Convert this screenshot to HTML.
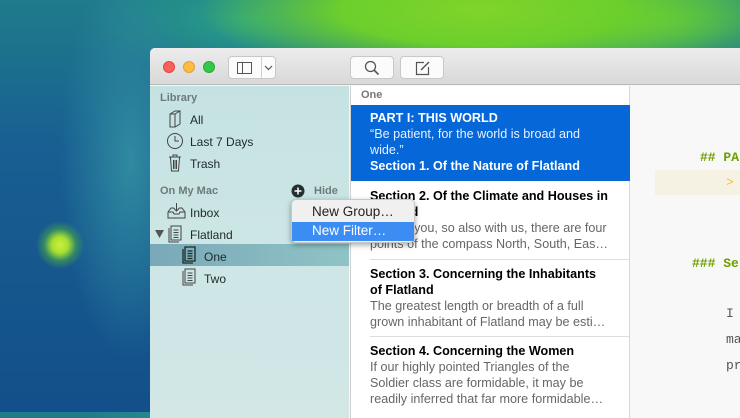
<!DOCTYPE html>
<html><head><meta charset="utf-8"><style>
*{margin:0;padding:0;box-sizing:border-box}
body{width:740px;height:412px;overflow:hidden;position:relative;font-family:"Liberation Sans",sans-serif;
background:
radial-gradient(circle at 60px 245px,#c8f040 0,#a8e030 8px,rgba(80,180,60,.5) 16px,transparent 24px),
radial-gradient(ellipse 280px 70px at 480px 10px,#7fd42a 0,#6ccf2c 50%,transparent 100%),
radial-gradient(ellipse 200px 60px at 650px 20px,#58c848 0,transparent 100%),
radial-gradient(ellipse 70px 200px at 130px 160px,#2f8aa0 0,transparent 100%),
radial-gradient(ellipse 160px 60px at 250px 20px,#2aa088 0,transparent 100%),
linear-gradient(180deg,#1f7c8a 0,#185f92 35%,#134f8a 100%);}
.win{position:absolute;left:150px;top:48px;width:600px;height:370px;background:#f7f7f7;border-radius:5px 0 0 0;overflow:hidden}
.tb{position:absolute;left:0;top:0;width:100%;height:37px;background:linear-gradient(#ececec,#d9d9d9);border-bottom:1px solid #b8b8b8}
.dot{position:absolute;top:13px;width:12px;height:12px;border-radius:50%}
.btn{position:absolute;top:8px;height:23px;background:#fbfbfb;border:1px solid #c8c8c8;border-radius:4px}
.side{position:absolute;left:0;top:38px;width:199px;height:340px;background:linear-gradient(180deg,#c5e2e2,#cfe6e6 60%,#d2e7e6)}
.side .h{position:absolute;left:10px;font-size:11px;color:#6b7b7b;font-weight:bold}
.side .it{position:absolute;font-size:12px;color:#1d2a2a}
.list{position:absolute;left:200px;top:38px;width:280px;height:340px;background:#fff;border-right:1px solid #d8d8d8;border-left:1px solid #d0d0d0}
.cell{position:absolute;left:19px;width:244px;font-size:12.6px;line-height:16px;color:#666;white-space:nowrap}
.cell b{color:#000}
.sep{position:absolute;left:19px;right:0;height:1px;background:#ddd}
.ed{position:absolute;left:481px;top:38px;width:120px;height:340px;background:#f8f8f8;font-family:"Liberation Mono",monospace;font-size:13px}
</style></head><body>
<div class="win">
 <div class="tb">
  <div class="dot" style="left:13px;background:#fc605c;border:1px solid #e0443f"></div>
  <div class="dot" style="left:33px;background:#fdbc40;border:1px solid #dea236"></div>
  <div class="dot" style="left:53px;background:#34c84a;border:1px solid #27aa35"></div>
  <div class="btn" style="left:78px;width:48px">
   <div style="position:absolute;left:8px;top:5px;width:15px;height:12px;border:1px solid #555"></div>
   <div style="position:absolute;left:13px;top:5px;width:1px;height:12px;background:#555"></div>
   <div style="position:absolute;left:32px;top:0;width:1px;height:21px;background:#d0d0d0"></div>
   <svg style="position:absolute;left:35px;top:8px" width="9" height="6"><path d="M1 1L4.5 4.5L8 1" stroke="#555" fill="none" stroke-width="1.2"/></svg>
  </div>
  <div class="btn" style="left:200px;width:44px"><svg style="position:absolute;left:13px;top:3px" width="16" height="16"><circle cx="6.5" cy="6.5" r="5" stroke="#555" fill="none" stroke-width="1.3"/><path d="M10 10L14.5 14.5" stroke="#555" stroke-width="1.6"/></svg></div>
  <div class="btn" style="left:250px;width:44px"><svg style="position:absolute;left:14px;top:3px" width="16" height="16"><path d="M9 2.5H1.5V14.5H13.5V7" stroke="#555" fill="none" stroke-width="1.2"/><path d="M6 10L14 2" stroke="#555" stroke-width="1.5"/></svg></div>
 </div>
 <div class="side">
  <div class="h" style="top:6px">Library</div>
  <svg style="position:absolute;left:18px;top:24px" width="14" height="18"><path d="M2 4L7 1H12V14L7 17H2Z M2 4H7V17 M7 4L12 1" stroke="#444" fill="none"/></svg>
  <div class="it" style="left:40px;top:27px">All</div>
  <svg style="position:absolute;left:16px;top:46px" width="18" height="18"><circle cx="9" cy="9" r="7.5" stroke="#444" fill="none"/><path d="M9 4V9H13" stroke="#444" fill="none"/></svg>
  <div class="it" style="left:40px;top:49px">Last 7 Days</div>
  <svg style="position:absolute;left:18px;top:68px" width="14" height="18"><path d="M1 3H13M5 3V1H9V3M2.5 3.5L3.5 17H10.5L11.5 3.5M5.5 6V15M7 6V15M8.5 6V15" stroke="#444" fill="none"/></svg>
  <div class="it" style="left:40px;top:71px">Trash</div>
  <div class="h" style="top:99px">On My Mac</div>
  <svg style="position:absolute;left:141px;top:98px" width="14" height="14"><circle cx="7" cy="7" r="6.5" fill="#243030"/><path d="M7 3.5V10.5M3.5 7H10.5" stroke="#fff" stroke-width="1.5"/></svg>
  <div class="h" style="left:164px;top:99px;color:#6b7b7b">Hide</div>
  <svg style="position:absolute;left:17px;top:116px" width="20" height="18"><path d="M1 10V16H18V10M1 10L4 6H7M18 10L15 6H12M1 10H6L7 12H12L13 10H18M9.5 1V9M6.5 6L9.5 9L12.5 6" stroke="#444" fill="none"/></svg>
  <div class="it" style="left:40px;top:120px">Inbox</div>
  <svg style="position:absolute;left:5px;top:144px" width="9" height="8"><path d="M0 0H9L4.5 8Z" fill="#555"/></svg>
  <svg style="position:absolute;left:18px;top:139px" width="14" height="18"><path d="M3 1H13V15H3ZM1 3V17H11M5.5 5H10.5M5.5 7.5H10.5M5.5 10H10.5M5.5 12.5H10.5" stroke="#444" fill="none"/></svg>
  <div class="it" style="left:40px;top:142px">Flatland</div>
  <div style="position:absolute;left:0;top:158px;width:199px;height:22px;background:linear-gradient(90deg,#7aa8b8,#8fc4c6)"></div>
  <svg style="position:absolute;left:32px;top:160px" width="14" height="18"><path d="M3 1H13V15H3ZM1 3V17H11M5.5 5H10.5M5.5 7.5H10.5M5.5 10H10.5M5.5 12.5H10.5" stroke="#1a2a2a" stroke-width="1.3" fill="none"/></svg>
  <div class="it" style="left:54px;top:164px">One</div>
  <svg style="position:absolute;left:32px;top:182px" width="14" height="18"><path d="M3 1H13V15H3ZM1 3V17H11M5.5 5H10.5M5.5 7.5H10.5M5.5 10H10.5M5.5 12.5H10.5" stroke="#444" fill="none"/></svg>
  <div class="it" style="left:54px;top:186px">Two</div>
 </div>
 <div class="list">
  <div style="position:absolute;left:10px;top:3px;font-size:11px;font-weight:bold;color:#777">One</div>
  <div style="position:absolute;left:0;top:19px;width:279px;height:76px;background:#0567d8"></div>
  <div class="cell" style="top:24px;color:#e8f0ff"><b style="color:#fff">PART I: THIS WORLD</b><br>“Be patient, for the world is broad and<br>wide.”<br><b style="color:#fff">Section 1. Of the Nature of Flatland</b></div>
  <div class="cell" style="top:102px"><b>Section 2. Of the Climate and Houses in<br>Flatland</b><br>As with you, so also with us, there are four<br>points of the compass North, South, Eas…</div>
  <div class="sep" style="top:173px"></div>
  <div class="cell" style="top:180px"><b>Section 3. Concerning the Inhabitants<br>of Flatland</b><br>The greatest length or breadth of a full<br>grown inhabitant of Flatland may be esti…</div>
  <div class="sep" style="top:250px"></div>
  <div class="cell" style="top:257px"><b>Section 4. Concerning the Women</b><br>If our highly pointed Triangles of the<br>Soldier class are formidable, it may be<br>readily inferred that far more formidable…</div>
 </div>
 <div class="ed">
  <div style="position:absolute;left:69px;top:64px;color:#6f9e00;font-weight:bold;white-space:nowrap">## PA</div>
  <div style="position:absolute;left:24px;top:84px;width:100px;height:25px;background:#f6f2e3"></div>
  <div style="position:absolute;left:95px;top:89px;color:#f0c040">&gt;</div>
  <div style="position:absolute;left:61px;top:170px;color:#6f9e00;font-weight:bold;white-space:nowrap">### Se</div>
  <div style="position:absolute;left:95px;top:220px;color:#555">I</div>
  <div style="position:absolute;left:95px;top:246px;color:#555">ma</div>
  <div style="position:absolute;left:95px;top:272px;color:#555">pr</div>
 </div>
</div>
<div style="position:absolute;left:291px;top:199px;width:124px;height:44px;background:#f0f0f0;border-radius:5px;box-shadow:0 2px 6px rgba(0,0,0,.35);border:1px solid #c8c8c8">
 <div style="position:absolute;left:20px;top:4px;font-size:13.5px;color:#222">New Group…</div>
 <div style="position:absolute;left:0;top:22px;width:122px;height:19px;background:#3b8df4"></div>
 <div style="position:absolute;left:20px;top:23px;font-size:13.5px;color:#fff">New Filter…</div>
</div>
</body></html>
